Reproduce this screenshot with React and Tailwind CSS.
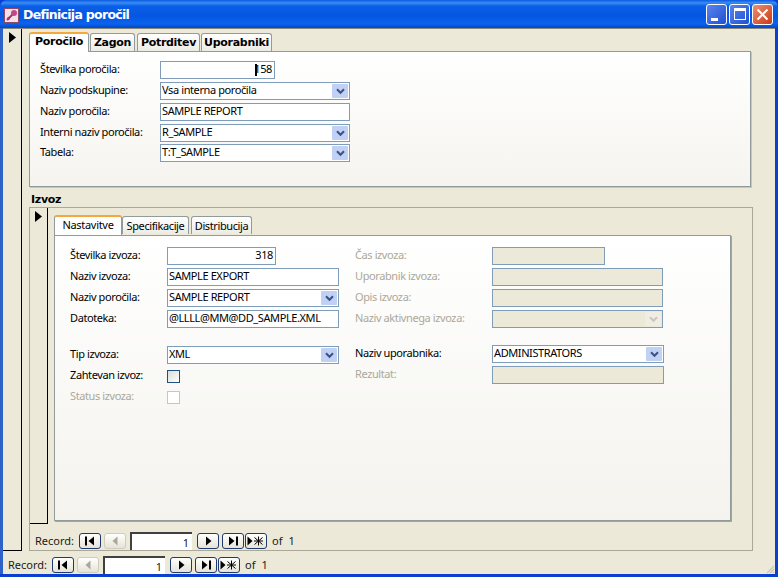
import React from "react";

const Chevron = ({ color = "#3A5382" }) => (
  <svg width="9" height="7" viewBox="0 0 9 7">
    <path d="M1 1.2 L4.5 4.8 L8 1.2" fill="none" stroke={color} strokeWidth="2" />
  </svg>
);

const Field = ({ w, value, combo, disabled, right }) => (
  <div
    className={`relative flex h-full items-center border border-[#7F9DB9] px-[1px] pb-[3px] tracking-[-0.4px] text-black ${w} ${
      disabled ? "bg-[#ECE9D8]" : "bg-white"
    } ${right ? "justify-end pr-[2px]" : ""}`}
  >
    <span>{value}</span>
    {combo && (
      <div
        className={`absolute top-[1px] right-[1px] bottom-[1px] flex w-[16px] items-center justify-center rounded-[1px] ${
          disabled ? "bg-[#F0EEE4]" : "bg-[#C1D0F5]"
        }`}
      >
        <Chevron color={disabled ? "#C9C7BA" : "#3A5382"} />
      </div>
    )}
  </div>
);

const Row = ({ label, labelW, muted, children, className = "" }) => (
  <div className={`flex h-[18px] items-center ${className}`}>
    <label className={`shrink-0 pb-[3px] tracking-[-0.4px] ${labelW} ${muted ? "text-[#ACA899]" : "text-black"}`}>
      {label}
    </label>
    {children}
  </div>
);

const Tab = ({ label, active, className = "" }) => (
  <div
    className={
      active
        ? `relative z-10 flex h-[20px] items-center justify-center rounded-t-[3px] border-x border-[#919B9C] border-t-2 border-t-[#F2A93B] bg-white pb-[3px] text-black ${className}`
        : `mt-[1px] flex h-[18px] items-center justify-center rounded-t-[3px] border-x border-t border-[#919B9C] bg-[linear-gradient(#FFFFFF,#ECEBE4)] pb-[1px] text-black ${className}`
    }
  >
    {label}
  </div>
);

const Selector = ({ w }) => (
  <div className={`flex shrink-0 justify-center border-r border-b border-black ${w}`}>
    <svg width="7" height="11" viewBox="0 0 7 11" className="mt-[3px]">
      <path d="M0 0 L7 5.5 L0 11 Z" fill="#000" />
    </svg>
  </div>
);

const NavBtn = ({ type, disabled }) => {
  const c = disabled ? "#ACA899" : "#000";
  return (
    <div
      className={`flex h-[16px] w-[22px] shrink-0 items-center justify-center rounded-[3px] border bg-[linear-gradient(#FFFFFF,#E6E3D6)] ${
        disabled ? "border-[#CFCCBD]" : "border-[#1F3A6E]"
      }`}
    >
      <svg width="18" height="10" viewBox="0 0 18 10">
        {type === "first" && (
          <>
            <rect x="4" y="0.5" width="2" height="9" fill={c} />
            <path d="M13 0.5 V9.5 L7.5 5 Z" fill={c} />
          </>
        )}
        {type === "prev" && <path d="M11.5 0.5 V9.5 L6.5 5 Z" fill={c} />}
        {type === "next" && <path d="M7 0.5 V9.5 L12.5 5 Z" fill={c} />}
        {type === "last" && (
          <>
            <path d="M5 0.5 V9.5 L10.5 5 Z" fill={c} />
            <rect x="12" y="0.5" width="2" height="9" fill={c} />
          </>
        )}
        {type === "new" && (
          <>
            <path d="M0.5 0.5 V9.5 L5.5 5 Z" fill={c} />
            <path d="M11.5 0.5 V9.5 M7.5 1.5 L15.5 8.5 M15.5 1.5 L7.5 8.5 M7 5 H16" stroke={c} strokeWidth="1" fill="none" />
          </>
        )}
      </svg>
    </div>
  );
};

const RecordNav = ({ className = "" }) => (
  <div className={`flex items-start text-[#1A1A1A] ${className}`}>
    <span className="flex h-[16px] w-[44px] shrink-0 items-center pb-[2px]">Record:</span>
    <NavBtn type="first" />
    <div className="ml-[3px]">
      <NavBtn type="prev" disabled />
    </div>
    <div className="mr-[5px] ml-[4px] -mt-px flex h-[18px] w-[62px] items-center justify-end border-t-2 border-l-2 border-[#404040] bg-white pr-[3px]">
      1
    </div>
    <NavBtn type="next" />
    <div className="ml-[3px] mr-[1px]">
      <NavBtn type="last" />
    </div>
    <NavBtn type="new" />
    <span className="ml-[5px] flex h-[16px] items-center pb-[2px]">of</span>
    <span className="ml-[6px] flex h-[16px] items-center pb-[2px]">1</span>
  </div>
);

export default function App() {
  return (
    <div className="flex h-[577px] w-[778px] flex-col overflow-hidden bg-[#0A3FD0] font-['Noto_Sans',sans-serif] text-[11px] leading-none">
      {/* title bar */}
      <div className="flex h-[28px] shrink-0 items-center rounded-t-[7px] bg-[linear-gradient(#0A5BE0_0%,#3A8CF5_10%,#0A5FE8_22%,#0556E0_55%,#0A63EE_85%,#0447C8_100%)] pr-[5px] pl-[4px]">
        <svg width="15" height="15" viewBox="0 0 15 15" className="mt-[2px] shrink-0">
          <rect x="0.5" y="0.5" width="14" height="14" fill="#F0E2E8" stroke="#8A4A68" />
          <path d="M3 12 L9 6 M3.5 9.5 L5.5 11.5" stroke="#B0306A" strokeWidth="2" />
          <circle cx="10" cy="5" r="3" fill="#C04888" />
        </svg>
        <span className="mt-[2px] ml-[4px] font-['DejaVu_Sans',sans-serif] text-[12.5px] font-bold tracking-[-0.7px] text-white">
          Definicija poročil
        </span>
        <div className="ml-auto flex gap-[2px]">
          <div className="flex h-[21px] w-[21px] items-end rounded-[3px] border border-white bg-[linear-gradient(135deg,#5A85F0,#1F4FD0)] pb-[3px] pl-[4px]">
            <div className="h-[3px] w-[7px] bg-white" />
          </div>
          <div className="flex h-[21px] w-[21px] items-center justify-center rounded-[3px] border border-white bg-[linear-gradient(135deg,#5A85F0,#1F4FD0)]">
            <div className="h-[12px] w-[12px] border border-t-[3px] border-white" />
          </div>
          <div className="flex h-[21px] w-[21px] items-center justify-center rounded-[3px] border border-white bg-[linear-gradient(135deg,#EE9070,#C83A18)]">
            <svg width="13" height="13" viewBox="0 0 13 13">
              <path d="M1.5 1.5 L11.5 11.5 M11.5 1.5 L1.5 11.5" stroke="#fff" strokeWidth="2" />
            </svg>
          </div>
        </div>
      </div>

      {/* window body */}
      <div className="relative mx-[3px] mb-[3px] flex min-h-0 flex-1 flex-col border-t border-[#8A8878] bg-[#ECE9D8] shadow-[-3px_0_0_#2E62C8]">
        <div className="flex min-h-0 flex-1">
          <Selector w="w-[19px]" />
          <div className="flex min-w-0 flex-1 flex-col pt-[3px] pr-[22px] pl-[7px]">
            {/* upper tabs */}
            <div className="flex h-[19px] shrink-0 items-start font-['DejaVu_Sans',sans-serif] font-bold tracking-[-0.3px]">
              <Tab label="Poročilo" active className="w-[60px]" />
              <Tab label="Zagon" className="ml-[1px] w-[45px]" />
              <Tab label="Potrditev" className="ml-[2px] w-[63px]" />
              <Tab label="Uporabniki" className="ml-[1px] w-[71px]" />
            </div>
            <div className="mr-[2px] flex h-[136px] shrink-0 flex-col gap-[3px] border border-[#919B9C] bg-[linear-gradient(#FFFFFF,#F5F4EF)] pt-[9px] pl-[10px] shadow-[1px_1px_0_#C9C6B6]">
              <Row label="Številka poročila:" labelW="w-[120px]">
                <Field w="w-[115px]" value="158" right />
                <div className="absolute ml-[215px] h-[12px] w-[2px] bg-black" />
              </Row>
              <Row label="Naziv podskupine:" labelW="w-[120px]">
                <Field w="w-[190px]" value="Vsa interna poročila" combo />
              </Row>
              <Row label="Naziv poročila:" labelW="w-[120px]">
                <Field w="w-[190px]" value="SAMPLE REPORT" />
              </Row>
              <Row label="Interni naziv poročila:" labelW="w-[120px]">
                <Field w="w-[190px]" value="R_SAMPLE" combo />
              </Row>
              <Row label="Tabela:" labelW="w-[120px]" className="-mt-px">
                <Field w="w-[190px]" value="T:T_SAMPLE" combo />
              </Row>
            </div>

            <div className="mt-[7px] h-[13px] shrink-0 pl-[2px] font-['DejaVu_Sans',sans-serif] font-bold tracking-[-0.3px] text-black">
              Izvoz
            </div>

            {/* subform */}
            <div className="flex min-h-0 flex-1 flex-col border border-[#ACA899]">
              <div className="flex min-h-0 flex-1">
                <Selector w="w-[18px]" />
                <div className="flex min-w-0 flex-1 flex-col pt-[7px] pr-[21px] pb-[3px] pl-[6px]">
                  <div className="flex h-[20px] shrink-0 items-start">
                    <Tab label="Nastavitve" active className="w-[68px] tracking-[-0.3px]" />
                    <Tab label="Specifikacije" className="w-[67px] tracking-[-0.4px]" />
                    <Tab label="Distribucija" className="ml-[2px] w-[61px] tracking-[-0.4px]" />
                  </div>
                  <div className="flex min-h-0 flex-1 border border-[#919B9C] bg-[linear-gradient(#FFFFFF,#F4F3EE)] pt-[11px] pl-[15px] shadow-[1px_1px_0_#A8A594]">
                    <div className="flex w-[285px] shrink-0 flex-col gap-[3px]">
                      <Row label="Številka izvoza:" labelW="w-[97px]">
                        <Field w="w-[109px]" value="318" right />
                      </Row>
                      <Row label="Naziv izvoza:" labelW="w-[97px]">
                        <Field w="w-[172px]" value="SAMPLE EXPORT" />
                      </Row>
                      <Row label="Naziv poročila:" labelW="w-[97px]">
                        <Field w="w-[172px]" value="SAMPLE REPORT" combo />
                      </Row>
                      <Row label="Datoteka:" labelW="w-[97px]">
                        <Field w="w-[172px]" value="@LLLL@MM@DD_SAMPLE.XML" />
                      </Row>
                      <Row label="Tip izvoza:" labelW="w-[97px]" className="mt-[15px]">
                        <Field w="w-[172px]" value="XML" combo />
                      </Row>
                      <Row label="Zahtevan izvoz:" labelW="w-[97px]">
                        <div className="h-[13px] w-[13px] border border-[#1C5180] bg-[linear-gradient(135deg,#DCDCD7,#FFFFFF)]" />
                      </Row>
                      <Row label="Status izvoza:" labelW="w-[97px]" muted>
                        <div className="h-[13px] w-[13px] border border-[#C9C7BA] bg-white" />
                      </Row>
                    </div>
                    <div className="flex flex-1 flex-col gap-[3px]">
                      <Row label="Čas izvoza:" labelW="w-[137px]" muted>
                        <Field w="w-[113px]" value="" disabled />
                      </Row>
                      <Row label="Uporabnik izvoza:" labelW="w-[137px]" muted>
                        <Field w="w-[171px]" value="" disabled />
                      </Row>
                      <Row label="Opis izvoza:" labelW="w-[137px]" muted>
                        <Field w="w-[171px]" value="" disabled />
                      </Row>
                      <Row label="Naziv aktivnega izvoza:" labelW="w-[137px]" muted>
                        <Field w="w-[171px]" value="" combo disabled />
                      </Row>
                      <Row label="Naziv uporabnika:" labelW="w-[137px]" className="mt-[14px]">
                        <Field w="w-[172px]" value="ADMINISTRATORS" combo />
                      </Row>
                      <Row label="Rezultat:" labelW="w-[137px]" muted>
                        <Field w="w-[172px]" value="" disabled />
                      </Row>
                    </div>
                  </div>
                </div>
              </div>
              <RecordNav className="h-[26px] shrink-0 pt-[9px] pl-[5px]" />
            </div>
          </div>
        </div>
        <RecordNav className="h-[23px] shrink-0 pt-[6px] pl-[5px]" />
        {/* resize grip */}
        <svg width="10" height="10" viewBox="0 0 10 10" className="absolute right-0 bottom-0">
          <path d="M9 2 L2 9 M9 5 L5 9 M9 8 L8 9" stroke="#C9C6B6" strokeWidth="1.2" />
        </svg>
      </div>
    </div>
  );
}
